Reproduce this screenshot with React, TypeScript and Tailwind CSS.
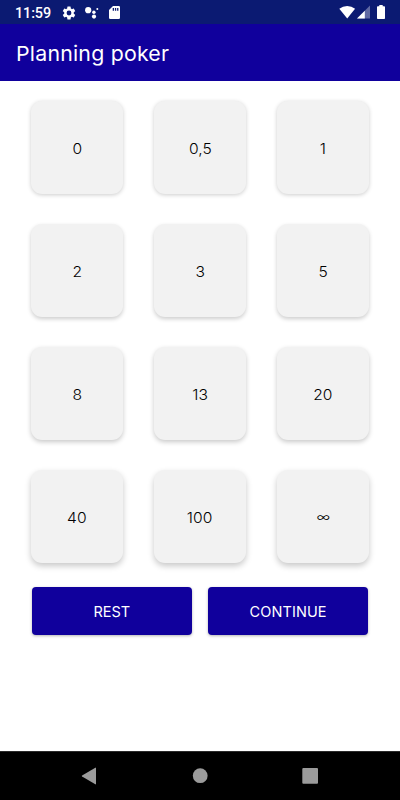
import clsx from "clsx";

const rows = [
  { shadow: "shadow-[0_1px_4px_rgba(0,0,0,0.2)]", cards: ["0", "0,5", "1"] },
  { shadow: "shadow-[0_2px_4px_rgba(0,0,0,0.2)]", cards: ["2", "3", "5"] },
  { shadow: "shadow-[0_2px_5px_rgba(0,0,0,0.22)]", cards: ["8", "13", "20"] },
  { shadow: "shadow-[0_3px_6px_rgba(0,0,0,0.22)]", cards: ["40", "100", "∞"] },
];

function StatusBar() {
  return (
    <div className="flex h-6 items-center bg-[#0b1a72] pl-[15px] pr-3 text-white">
      <span className="mt-[3px] w-[36px] whitespace-nowrap font-['Roboto',sans-serif] text-[14.4px] font-medium leading-6 tracking-[-0.1px]">
        11:59
      </span>
      <svg className="ml-[10px] mt-[1px]" viewBox="0 0 24 24" width="16" height="16" fill="white">
        <path d="M19.14 12.94c.04-.3.06-.61.06-.94 0-.32-.02-.64-.07-.94l2.03-1.58a.49.49 0 00.12-.61l-1.92-3.32a.49.49 0 00-.59-.22l-2.39.96a7 7 0 00-1.62-.94l-.36-2.54A.48.48 0 0013.92 2.4h-3.84a.48.48 0 00-.47.41l-.36 2.54a7.3 7.3 0 00-1.62.94l-2.39-.96a.48.48 0 00-.59.22L2.74 8.87a.47.47 0 00.12.61l2.03 1.58c-.05.3-.09.63-.09.94s.02.64.07.94l-2.03 1.58a.49.49 0 00-.12.61l1.92 3.32c.12.22.37.29.59.22l2.39-.96c.5.38 1.03.7 1.62.94l.36 2.54c.05.24.24.41.48.41h3.84c.24 0 .44-.17.47-.41l.36-2.54a7 7 0 001.62-.94l2.39.96c.22.08.47 0 .59-.22l1.92-3.32a.47.47 0 00-.12-.61zM12 15.6a3.6 3.6 0 110-7.2 3.6 3.6 0 010 7.2z" />
      </svg>
      <svg className="ml-[8px] mt-[1px]" viewBox="0 0 14 14" width="14" height="14" fill="white">
        <circle cx="3.2" cy="4.2" r="3.1" />
        <circle cx="8.9" cy="6.3" r="1.7" />
        <circle cx="12.3" cy="3" r="1" />
        <circle cx="9" cy="10.6" r="2.1" />
      </svg>
      <svg className="ml-[10px] mt-[1px]" viewBox="0 0 11 13" width="11" height="13" fill="white">
        <path
          fillRule="evenodd"
          d="M4 0h5.7A1.3 1.3 0 0111 1.3v10.4A1.3 1.3 0 019.7 13H1.3A1.3 1.3 0 010 11.7V4zM3.7 2v2.7H5V2zM5.9 2v2.7h1.3V2zM8.1 2v2.7h1.3V2z"
        />
      </svg>
      <svg className="ml-auto" viewBox="0 0 17 14" width="17" height="14" fill="white">
        <path d="M8.2 13.5L.3 3.7a13 13 0 0115.8 0z" />
      </svg>
      <svg className="ml-[1px]" viewBox="0 0 14 14" width="14" height="14">
        <path d="M0 13.5L13 .5v13z" fill="white" fillOpacity=".35" />
        <path d="M0 13.5L7.8 5.7v7.8z" fill="white" />
      </svg>
      <svg className="ml-[6px] mr-[3px]" viewBox="0 0 8 14" width="8" height="14" fill="white">
        <path d="M2.3 0h3.4v1.3H7.2a.8.8 0 01.8.8v11.1a.8.8 0 01-.8.8H.8a.8.8 0 01-.8-.8V2.1a.8.8 0 01.8-.8h1.5z" />
      </svg>
    </div>
  );
}

function NavigationBar() {
  return (
    <div className="flex h-[49px] items-center justify-between border-t border-[#2b2b2b] bg-black px-[80px]">
      <svg viewBox="0 0 18 18" width="18" height="18" fill="#9b9b9b">
        <path d="M16 1v16a.5.5 0 01-.7.3L2.1 9.5a.6.6 0 010-1L15.3.7a.5.5 0 01.7.3z" />
      </svg>
      <svg viewBox="0 0 16 16" width="16" height="16" fill="#9b9b9b">
        <circle cx="8.2" cy="7.7" r="7.4" />
      </svg>
      <svg viewBox="0 0 18 18" width="18" height="18" fill="#9b9b9b">
        <rect x="0.3" y="1" width="15.7" height="15.7" rx="1" />
      </svg>
    </div>
  );
}

export default function App() {
  return (
    <div className="flex h-[800px] w-[400px] flex-col overflow-hidden bg-white font-['Inter','Liberation_Sans',sans-serif]">
      <StatusBar />
      <header className="flex h-[57px] items-center bg-[#10009c] pl-4 pt-[4px] text-white">
        <h1 className="origin-left scale-x-[1.04] text-[20.5px] font-normal tracking-[0.2px]">
          Planning poker
        </h1>
      </header>

      <main className="flex-1">
        <div className="flex flex-col gap-[31px] px-[31px] pt-[20.4px]">
          {rows.map((row) => (
            <div key={row.cards[0]} className="flex justify-between">
              {row.cards.map((card) => (
                <button
                  key={card}
                  className={clsx(
                    "flex h-[92.5px] w-[92px] items-center justify-center rounded-[11px] bg-[#f2f2f2] text-black -mb-[0.5px]",
                    card === "∞" ? "pt-px text-[13.5px]" : "pt-[2px] text-[14.2px]",
                    row.shadow
                  )}
                >
                  <span className="inline-block scale-x-[1.1] font-[350]">{card}</span>
                </button>
              ))}
            </div>
          ))}
        </div>

        <div className="mt-[24.6px] flex gap-[16.5px] px-8 text-[14.5px] text-white">
          <button className="h-[48px] flex-1 rounded-[4px] bg-[#10009c] pt-px shadow-[0_1px_3px_rgba(0,0,0,0.3)]">
            REST
          </button>
          <button className="h-[48px] flex-1 rounded-[4px] bg-[#10009c] pt-px tracking-[0.1px] shadow-[0_1px_3px_rgba(0,0,0,0.3)]">
            CONTINUE
          </button>
        </div>
      </main>

      <NavigationBar />
    </div>
  );
}
